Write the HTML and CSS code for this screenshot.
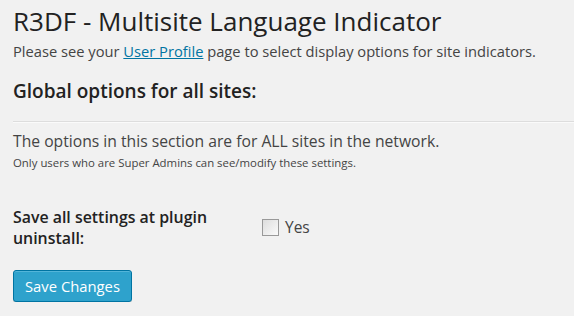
FILE: index.html
```html
<!DOCTYPE html>
<html lang="en">
<head>
  <meta charset="UTF-8" />
  <title>R3DF - Multisite Language Indicator</title>
  <link rel="stylesheet" href="styles.css">
</head>
<body>

  <div class="wrap">
    <h2 class="page-title">R3DF - Multisite Language Indicator</h2>
    <p class="intro">Please see your <a href="#">User Profile</a> page to select display options for site indicators.</p>

    <h3 class="section-title">Global options for all sites:</h3>
    <hr class="rule">

    <p class="section-desc">The options in this section are for ALL sites in the network.</p>
    <p class="section-note">Only users who are Super Admins can see/modify these settings.</p>

    <div class="form-row">
      <div class="row-label">Save all settings at plugin uninstall:</div>
      <label class="row-field">
        <input type="checkbox" class="check">
        <span>Yes</span>
      </label>
    </div>

    <div class="submit">
      <button class="save-btn">Save Changes</button>
    </div>
  </div>

</body>
</html>
```

FILE: styles.css
```css
html, body {
  margin: 0;
  padding: 0;
  background-color: #f1f1f1;
  color: #444;
  font-family: 'Open Sans', sans-serif;
  font-size: 15.5px;
}

.wrap {
  padding: 3px 0 0 13px;
}

.page-title {
  margin: 0;
  font-size: 26px;
  font-weight: 400;
  line-height: 36px;
  color: #222;
}

.intro {
  margin: 0;
  font-size: 14.7px;
  line-height: 24px;
}

.intro a {
  color: #0074a2;
  text-decoration: underline;
}

.section-title {
  margin: 14px 0 0;
  font-size: 19px;
  font-weight: 600;
  line-height: 28px;
  color: #222;
}

.rule {
  margin: 16px 0 0;
  border: 0;
  border-top: 1px solid #ddd;
  border-bottom: 1px solid #fafafa;
}

.section-desc {
  margin: 6px 0 0;
  font-size: 15.7px;
  line-height: 24px;
}

.section-note {
  margin: 0;
  font-size: 11.4px;
  line-height: 20px;
}

.form-row {
  display: flex;
  align-items: flex-start;
  margin-top: 34px;
}

.row-label {
  width: 239px;
  padding-right: 10px;
  font-size: 15.9px;
  font-weight: 600;
  color: #222;
  line-height: 21px;
}

.row-field {
  display: flex;
  align-items: center;
  gap: 6px;
  margin-top: 10px;
  line-height: 21px;
}

.check {
  appearance: none;
  margin: 0;
  width: 17px;
  height: 17px;
  border: 1px solid #999;
  box-sizing: border-box;
  background: linear-gradient(135deg, #ddd, #fafafa);
}

.submit {
  margin-top: 21px;
}

.save-btn {
  height: 32px;
  padding: 0 11px;
  border: 1px solid #0074a2;
  border-radius: 3px;
  background-color: #2ea2cc;
  box-shadow: inset 0 1px 0 rgba(120, 200, 230, 0.5), 0 1px 0 rgba(0, 0, 0, 0.15);
  color: #fff;
  font-family: 'Open Sans', sans-serif;
  font-size: 14.8px;
}
```
